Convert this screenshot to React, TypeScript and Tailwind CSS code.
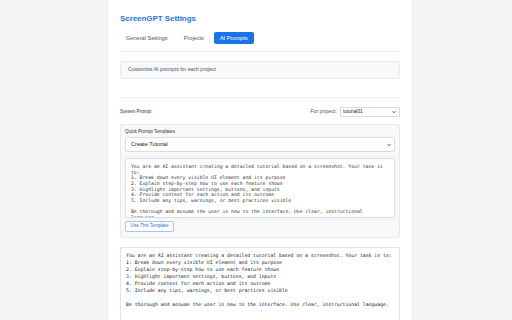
import React from 'react';

const PROMPT = `You are an AI assistant creating a detailed tutorial based on a screenshot. Your task is to:
1. Break down every visible UI element and its purpose
2. Explain step-by-step how to use each feature shown
3. Highlight important settings, buttons, and inputs
4. Provide context for each action and its outcome
5. Include any tips, warnings, or best practices visible

Be thorough and assume the user is new to the interface. Use clear, instructional language.`;

const sans = { fontFamily: '"Liberation Sans", Arial, sans-serif' };
const mono = { fontFamily: '"DejaVu Sans Mono", "Liberation Mono", monospace' };

const Chevron = () => (
  <svg
    viewBox="0 0 8 5"
    className="absolute right-[4px] top-1/2 -translate-y-1/2 w-[4px] h-[3px] pointer-events-none"
  >
    <path d="M1 1l3 3 3-3" fill="none" stroke="#222" strokeWidth="1.6" />
  </svg>
);

export default function App() {
  return (
    <div className="min-h-screen bg-[#f3f3f3] flex justify-center pl-[8px]" style={sans}>
      <div className="w-[304px] min-h-screen bg-white px-3 pt-[13px] shadow-[0_0_2px_rgba(0,0,0,0.06)]">
        <h1 className="text-[7.9px] leading-[12px] font-semibold text-[#1a73e8]">ScreenGPT Settings</h1>

        {/* tabs */}
        <div className="mt-[7px] pb-[7px] border-b border-[#ececec] flex gap-[4px]">
          {['General Settings', 'Projects', 'AI Prompts'].map((t) => (
            <div
              key={t}
              className={
                t === 'AI Prompts'
                  ? 'h-[12px] px-[6px] flex items-center rounded-[2px] bg-[#1a73e8] text-white text-[5.6px] font-medium'
                  : 'h-[12px] px-[6px] flex items-center text-[#555] text-[5.6px]'
              }
            >
              {t}
            </div>
          ))}
        </div>

        <div className="mt-[9px] h-[18px] flex items-center px-[7px] bg-[#f8f9fa] border border-[#ebebeb] rounded-[2px] text-[5.2px] text-[#555]">
          Customize AI prompts for each project
        </div>

        <div className="mt-[18px] border-t border-[#ececec] pt-[9px]">
          <div className="flex items-center justify-between h-[10px]">
            <span className="text-[4.6px] text-[#333]">System Prompt</span>
            <div className="flex items-center gap-[3px]">
              <span className="text-[5.3px] text-[#555]">For project:</span>
              <div className="relative">
                <select
                  defaultValue="tutorial01"
                  className="appearance-none block w-[60px] h-[10px] border border-[#dcdcdc] rounded-[1px] bg-white text-[4.8px] text-[#222] pl-[2px]"
                  style={sans}
                >
                  <option>tutorial01</option>
                </select>
                <Chevron />
              </div>
            </div>
          </div>

          <div className="mt-[7px] bg-[#f6f8fa] border border-[#e6e8eb] rounded-[2px] p-[4px] pb-[5px]">
            <div className="text-[4.6px] text-[#333] leading-[6px]">Quick Prompt Templates</div>
            <div className="relative mt-[2px]">
              <select
                defaultValue="Create Tutorial"
                className="appearance-none block w-full h-[15px] border border-[#dcdcdc] rounded-[2px] bg-white text-[5.6px] text-[#222] pl-[5px]"
                style={sans}
              >
                <option>Create Tutorial</option>
              </select>
              <Chevron />
            </div>
            <textarea
              readOnly
              value={PROMPT}
              className="block mt-[6px] w-full h-[60px] resize-none overflow-hidden border border-[#dcdcdc] rounded-[2px] bg-white px-[5px] py-[5px] text-[4.75px] leading-[5.67px] text-[#333]"
              style={mono}
            />
            <button className="mt-[3px] h-[11px] w-[49px] border border-[#a8c4f0] rounded-[2px] bg-white text-[#1a73e8] text-[4.6px] flex items-center justify-center">
              Use This Template
            </button>
          </div>

          <textarea
            readOnly
            value={PROMPT}
            className="block mt-[9px] w-full h-[80px] resize-none overflow-hidden border border-[#e2e2e2] rounded-[2px] bg-white px-[5px] py-[4px] text-[4.8px] leading-[7px] text-[#222]"
            style={mono}
          />
        </div>
      </div>
    </div>
  );
}
